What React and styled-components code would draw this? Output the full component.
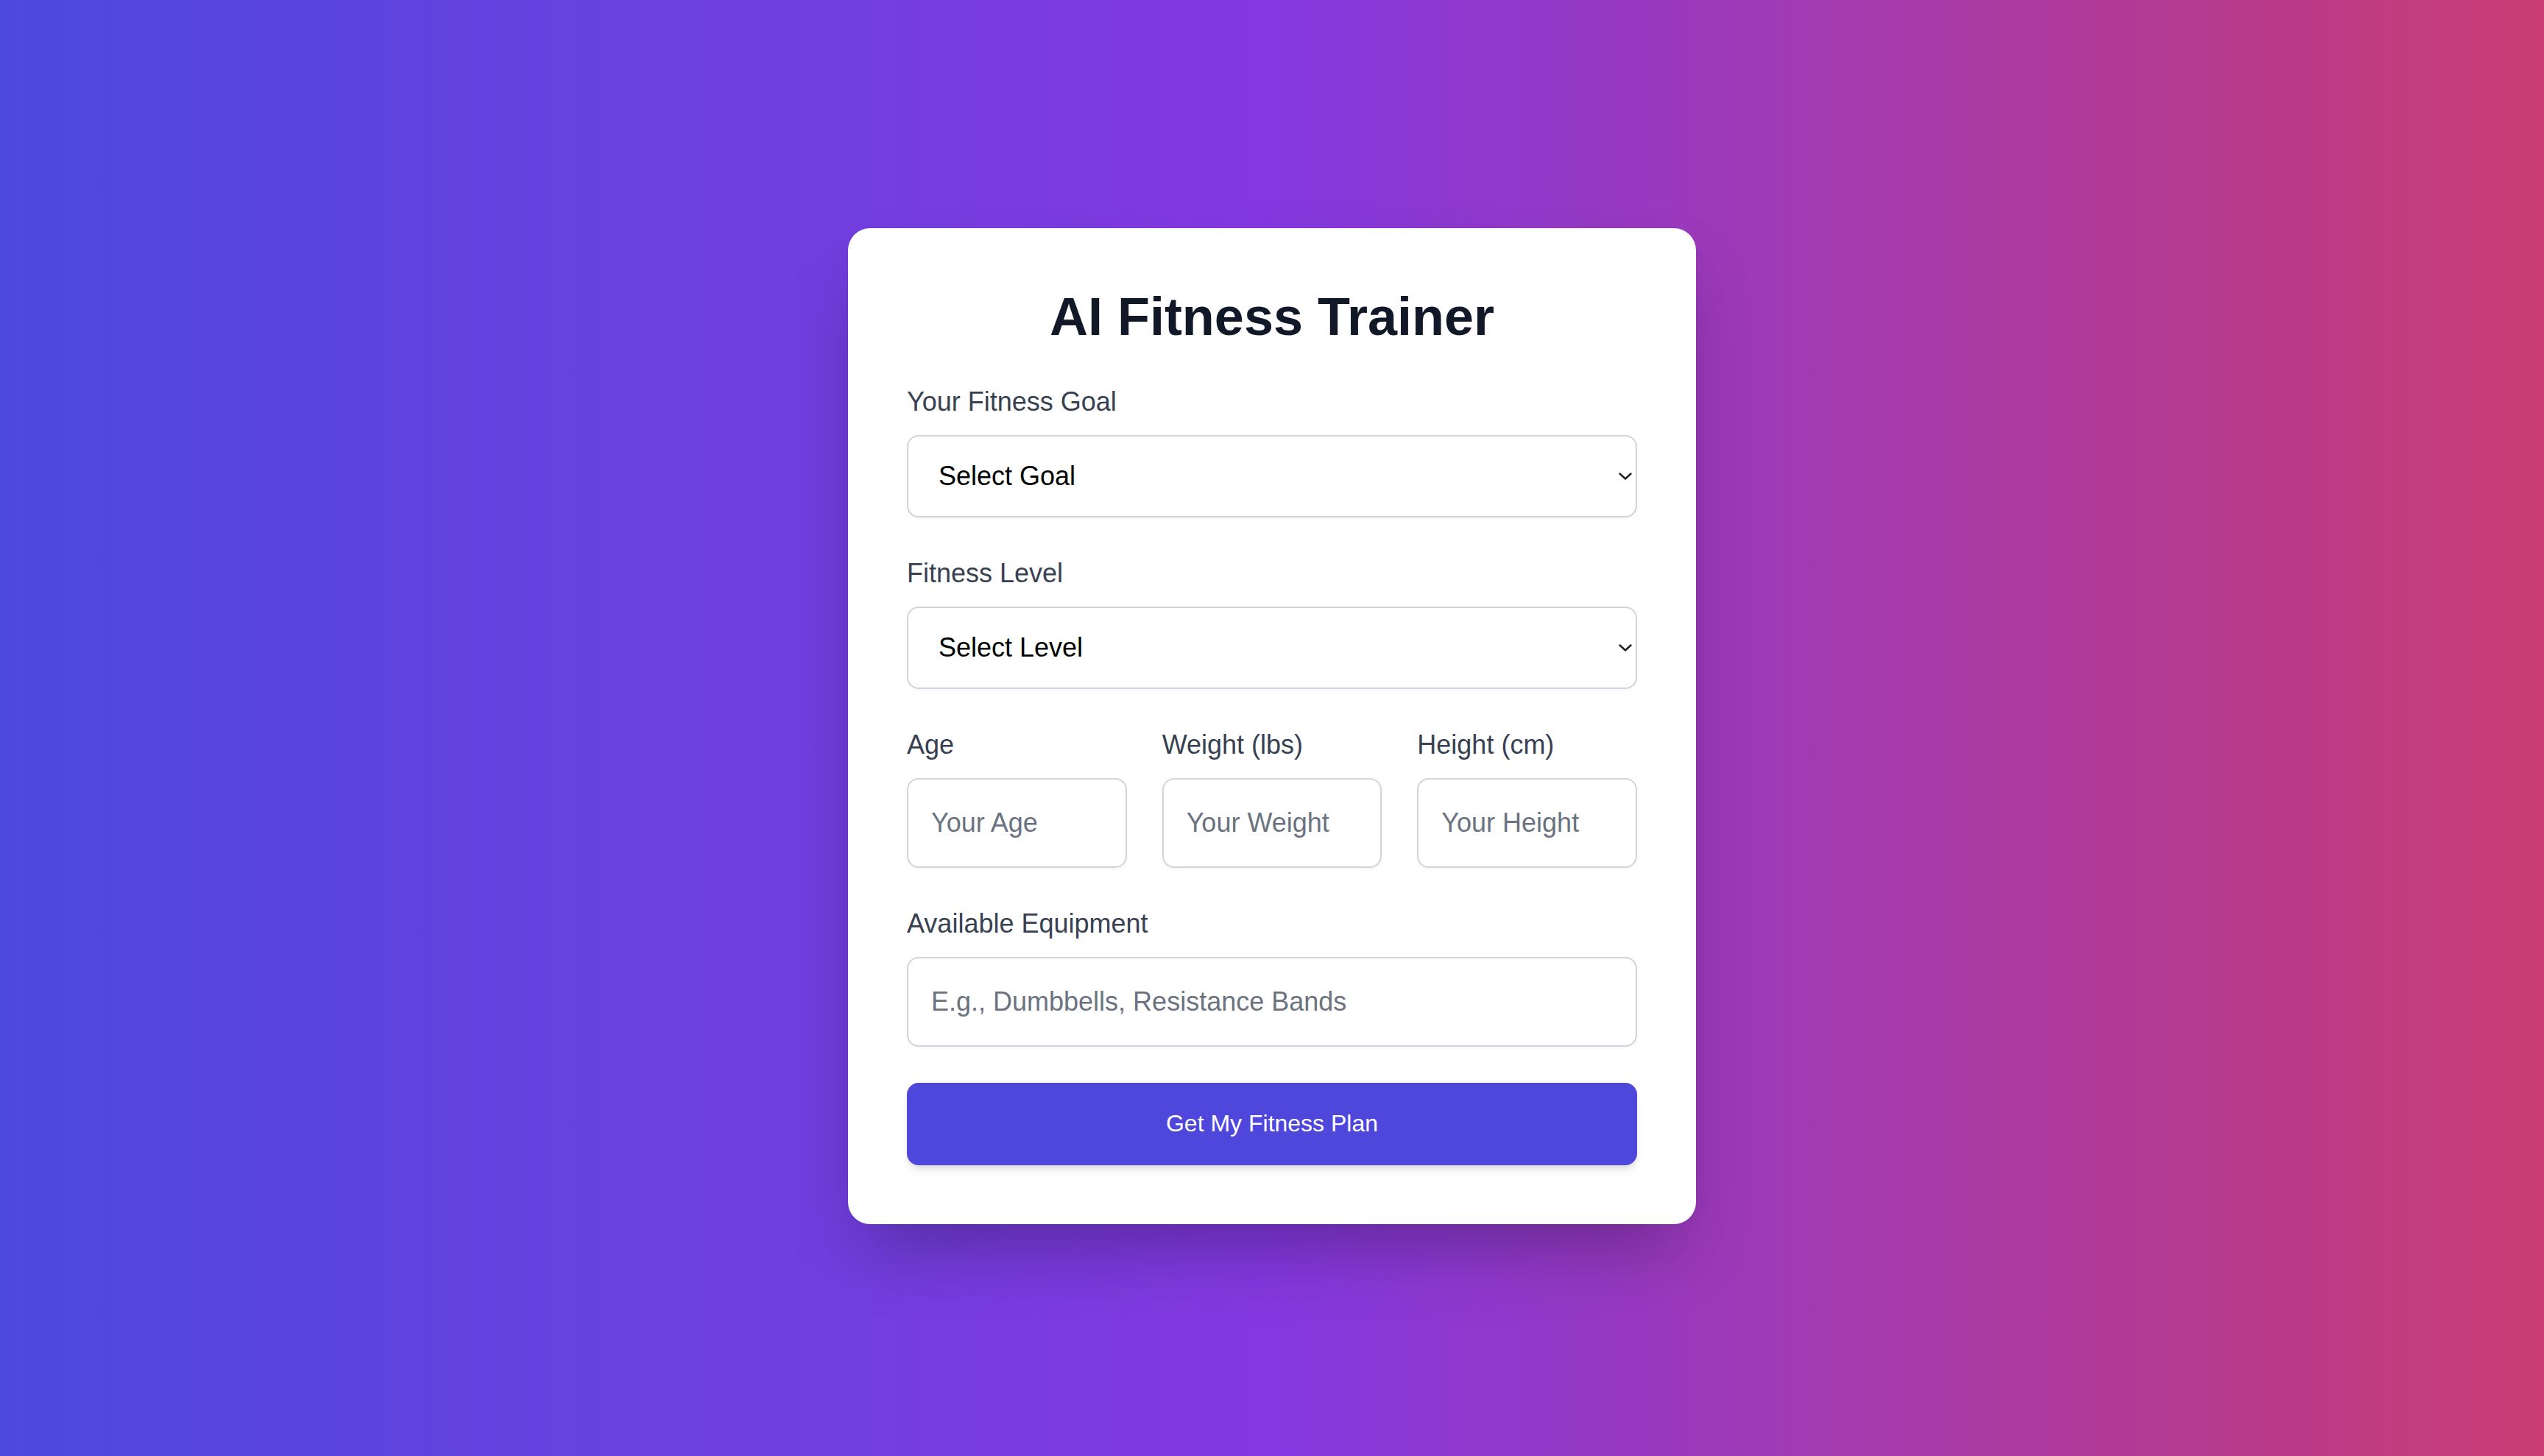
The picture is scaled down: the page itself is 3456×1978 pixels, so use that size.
import styled, { createGlobalStyle } from 'styled-components'

const GlobalStyle = createGlobalStyle`
  * {
    box-sizing: border-box;
  }

  body {
    margin: 0;
    font-family: "Liberation Sans", Arial, Helvetica, sans-serif;
  }
`

const goals = ['Weight Loss', 'Muscle Gain', 'Endurance', 'Flexibility']
const levels = ['Beginner', 'Intermediate', 'Advanced']

const SelectField = ({ label, placeholder, options }) => (
  <Field>
    <Label>{label}</Label>
    <SelectWrap>
      <Select defaultValue="">
        <option value="">{placeholder}</option>
        {options.map((o) => (
          <option key={o} value={o}>{o}</option>
        ))}
      </Select>
      <Chevron viewBox="0 0 18 10" fill="none">
        <path d="M1.5 1.5 L9 8.5 L16.5 1.5" stroke="#1f1f1f" strokeWidth="2.4" strokeLinecap="round" strokeLinejoin="round" />
      </Chevron>
    </SelectWrap>
  </Field>
)

const TextField = ({ label, placeholder, type = 'text' }) => (
  <Field>
    <Label>{label}</Label>
    <Input type={type} placeholder={placeholder} />
  </Field>
)

export default function App() {
  return (
    <>
      <GlobalStyle />
      <Page>
        <Card>
          <Title>AI Fitness Trainer</Title>

          <Form onSubmit={(e) => e.preventDefault()}>
            <SelectField label="Your Fitness Goal" placeholder="Select Goal" options={goals} />
            <SelectField label="Fitness Level" placeholder="Select Level" options={levels} />

            <Row>
              <TextField label="Age" placeholder="Your Age" type="number" />
              <TextField label="Weight (lbs)" placeholder="Your Weight" type="number" />
              <TextField label="Height (cm)" placeholder="Your Height" type="number" />
            </Row>

            <TextField label="Available Equipment" placeholder="E.g., Dumbbells, Resistance Bands" />

            <Button type="submit">Get My Fitness Plan</Button>
          </Form>
        </Card>
      </Page>
    </>
  )
}

const Page = styled.div`
  min-height: 100vh;
  display: flex;
  align-items: center;
  justify-content: center;
  padding-bottom: 6px;
  background: linear-gradient(to right, #4e49dd 0%, #8438e0 50%, #c93c73 100%);
`

const Card = styled.div`
  width: 1152px;
  background: #fff;
  border-radius: 30px;
  padding: 80px;
  box-shadow: 0 50px 100px -24px rgba(0, 0, 0, 0.3);
`

const Title = styled.h1`
  margin: 0 0 48px;
  text-align: center;
  font-size: 72px;
  line-height: 80px;
  font-weight: 700;
  color: #111827;
`

const Form = styled.form`
  display: flex;
  flex-direction: column;
  gap: 48px;
`

const Field = styled.div`
  display: flex;
  flex-direction: column;
  min-width: 0;
`

const Label = styled.label`
  display: block;
  margin-bottom: 17px;
  font-size: 36px;
  line-height: 56px;
  color: #374151;
`

const Row = styled.div`
  display: grid;
  grid-template-columns: repeat(3, 1fr);
  gap: 48px;
`

const SelectWrap = styled.div`
  position: relative;
`

const Select = styled.select`
  appearance: none;
  width: 100%;
  height: 112px;
  padding: 0 48px 0 41px;
  border: 2px solid #d1d5db;
  border-radius: 16px;
  background: #fff;
  font-family: inherit;
  font-size: 36px;
  color: #000;
  box-shadow: 0 2px 4px rgba(0, 0, 0, 0.04);
  outline: none;
`

const Chevron = styled.svg`
  position: absolute;
  right: 7px;
  top: 50%;
  width: 18px;
  height: 10px;
  margin-top: -5px;
  pointer-events: none;
`

const Input = styled.input`
  width: 100%;
  height: 122px;
  padding: 0 31px;
  border: 2px solid #d1d5db;
  border-radius: 16px;
  font-family: inherit;
  font-size: 36px;
  color: #111827;
  box-shadow: 0 2px 4px rgba(0, 0, 0, 0.04);
  outline: none;
  -moz-appearance: textfield;

  &::placeholder {
    color: #6b7280;
  }

  &::-webkit-outer-spin-button,
  &::-webkit-inner-spin-button {
    -webkit-appearance: none;
    margin: 0;
  }
`

const Button = styled.button`
  height: 112px;
  margin-top: 1px;
  border: none;
  border-radius: 16px;
  background: #4f46dc;
  color: #fff;
  font-family: inherit;
  font-size: 32px;
  cursor: pointer;
  box-shadow: 0 8px 12px -2px rgba(0, 0, 0, 0.1), 0 4px 8px -4px rgba(0, 0, 0, 0.1);
`
